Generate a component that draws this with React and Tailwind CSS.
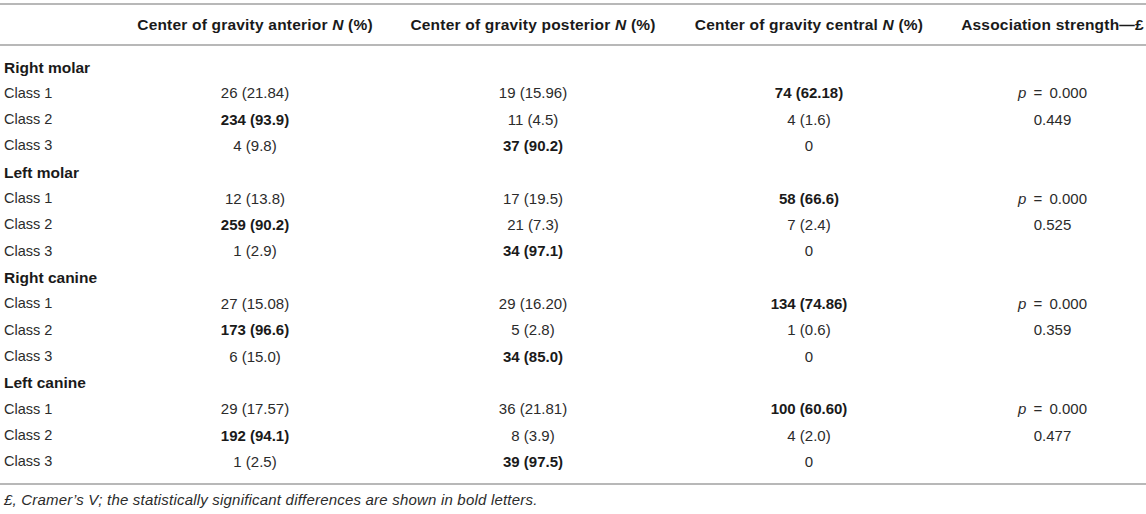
import React from "react";

const groups = [
  {
    name: "Right molar",
    rows: [
      ["Class 1", ["26 (21.84)", false], ["19 (15.96)", false], ["74 (62.18)", true], "p"],
      ["Class 2", ["234 (93.9)", true], ["11 (4.5)", false], ["4 (1.6)", false], "0.449"],
      ["Class 3", ["4 (9.8)", false], ["37 (90.2)", true], ["0", false], ""],
    ],
  },
  {
    name: "Left molar",
    rows: [
      ["Class 1", ["12 (13.8)", false], ["17 (19.5)", false], ["58 (66.6)", true], "p"],
      ["Class 2", ["259 (90.2)", true], ["21 (7.3)", false], ["7 (2.4)", false], "0.525"],
      ["Class 3", ["1 (2.9)", false], ["34 (97.1)", true], ["0", false], ""],
    ],
  },
  {
    name: "Right canine",
    rows: [
      ["Class 1", ["27 (15.08)", false], ["29 (16.20)", false], ["134 (74.86)", true], "p"],
      ["Class 2", ["173 (96.6)", true], ["5 (2.8)", false], ["1 (0.6)", false], "0.359"],
      ["Class 3", ["6 (15.0)", false], ["34 (85.0)", true], ["0", false], ""],
    ],
  },
  {
    name: "Left canine",
    rows: [
      ["Class 1", ["29 (17.57)", false], ["36 (21.81)", false], ["100 (60.60)", true], "p"],
      ["Class 2", ["192 (94.1)", true], ["8 (3.9)", false], ["4 (2.0)", false], "0.477"],
      ["Class 3", ["1 (2.5)", false], ["39 (97.5)", true], ["0", false], ""],
    ],
  },
];

const grid = "grid grid-cols-[103px_304px_252px_300px_187px]";

function Cell({ v }) {
  const [text, bold] = v;
  return (
    <div className={bold ? "text-center text-[15px] font-bold text-[#1a1a1a]" : "text-center text-[15px]"}>
      {text}
    </div>
  );
}

export default function App() {
  return (
    <div className="w-[1146px] h-[514px] bg-white pt-[3px] font-['Liberation_Sans',Arial,sans-serif] text-[#2b2b2b] overflow-hidden">
      <div className="border-t-2 border-[#b8b8b8]">
        <div className={`${grid} h-[39px] items-center text-[15.5px] font-bold tracking-[0.2px] text-[#1a1a1a]`}>
          <div></div>
          <div className="text-center">
            Center of gravity anterior <i>N</i> (%)
          </div>
          <div className="text-center">
            Center of gravity posterior <i>N</i> (%)
          </div>
          <div className="text-center">
            Center of gravity central <i>N</i> (%)
          </div>
          <div className="text-center">Association strength—£</div>
        </div>
      </div>
      <div className="border-t-2 border-[#b8b8b8] pt-[8px] pb-[8px]">
        {groups.map((g) => (
          <React.Fragment key={g.name}>
            <div className={`${grid} h-[26.33px] items-center`}>
              <div className="pl-[4px] text-[15.5px] font-bold text-[#1a1a1a] whitespace-nowrap">{g.name}</div>
            </div>
            {g.rows.map((r, i) => (
              <div key={i} className={`${grid} h-[26.33px] items-center`}>
                <div className="pl-[4px] text-[14.5px] whitespace-nowrap">{r[0]}</div>
                <Cell v={r[1]} />
                <Cell v={r[2]} />
                <Cell v={r[3]} />
                <div className="text-center text-[15px]">
                  {r[4] === "p" ? (
                    <span>
                      <i>p</i> <span className="mx-[3px]">=</span> 0.000
                    </span>
                  ) : (
                    r[4]
                  )}
                </div>
              </div>
            ))}
          </React.Fragment>
        ))}
      </div>
      <div className="border-t-2 border-[#b8b8b8] pt-[5px] pl-[4px] text-[15px] italic tracking-[0.2px] leading-[20px] whitespace-nowrap">
        £, Cramer’s V; the statistically significant differences are shown in bold letters.
      </div>
    </div>
  );
}
